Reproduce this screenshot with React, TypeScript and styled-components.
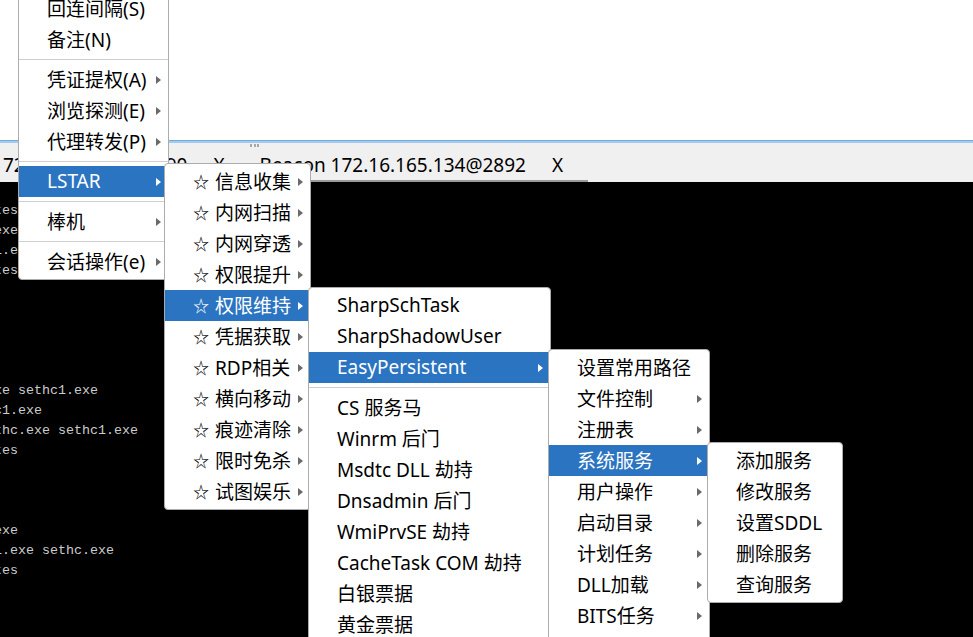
import React from "react";
import styled, { createGlobalStyle } from "styled-components";

const GlobalStyle = createGlobalStyle`
  html, body {
    margin: 0;
    padding: 0;
    background: #ffffff;
  }
  body {
    font-family: "Noto Sans", "Noto Sans CJK SC", sans-serif;
  }
`;

const Screen = styled.div`
  position: relative;
  width: 973px;
  height: 637px;
  overflow: hidden;
  display: flex;
  flex-direction: column;
  background: #ffffff;
`;

const TopPane = styled.div`
  flex: none;
  height: 140px;
  background: #ffffff;
`;

const SplitLine = styled.div`
  flex: none;
  height: 3px;
  box-sizing: border-box;
  border-top: 1px solid #74a9da;
  background: #a2ccef;
`;

const Grip = styled.div`
  flex: none;
  height: 7px;
  box-sizing: border-box;
  padding: 1px 0 0 250px;
  display: flex;
  gap: 1.5px;
  background: #f0f0f0;
  span {
    width: 2px;
    height: 3px;
    background: #a8a8a8;
  }
`;

const TabBar = styled.div`
  flex: none;
  height: 32px;
  display: flex;
  background: #f0f0f0;
  overflow: hidden;
`;

const TabStrip = styled.div`
  display: flex;
  margin-left: -89px;
`;

const Tab = styled.div<{ $active?: boolean }>`
  display: flex;
  align-items: center;
  gap: 26px;
  padding: 0 25px 0 10px;
  box-sizing: border-box;
  font-size: 19px;
  color: #000;
  white-space: nowrap;
  border-bottom: 2px solid ${(p) => (p.$active ? "#9a9a9a" : "transparent")};
`;

const Terminal = styled.div`
  flex: 1;
  background: #000;
  padding-top: 19px;
  overflow: hidden;
`;

const TermLine = styled.div`
  height: 20px;
  line-height: 20px;
  margin-left: -6px;
  font-family: "Liberation Mono", monospace;
  font-size: 13.33px;
  color: #cccccc;
  white-space: pre;
`;

const Menu = styled.div<{ $x: number; $y: number; $w: number; $tail?: boolean }>`
  position: absolute;
  left: ${(p) => p.$x}px;
  top: ${(p) => p.$y}px;
  width: ${(p) => p.$w}px;
  box-sizing: border-box;
  padding: 2px 0 ${(p) => (p.$tail ? "40px" : "2px")};
  background: #ffffff;
  border: 1px solid #acacac;
  border-radius: 4px;
`;

const Row = styled.div<{ $on?: boolean }>`
  display: flex;
  align-items: center;
  height: 31px;
  box-sizing: border-box;
  padding: 0 7px 2px 28px;
  font-size: 19px;
  white-space: nowrap;
  color: ${(p) => (p.$on ? "#ffffff" : "#000000")};
  background: ${(p) => (p.$on ? "#2b74c1" : "transparent")};
`;

const Label = styled.span`
  flex: 1;
  display: flex;
  align-items: center;
`;

const Star = styled.span`
  display: inline-block;
  width: 22px;
  font-family: "Noto Sans CJK SC", sans-serif;
  font-size: 16px;
  line-height: 1;
`;

const Arrow = styled.span<{ $on?: boolean }>`
  width: 0;
  height: 0;
  margin-top: 2px;
  border-top: 4px solid transparent;
  border-bottom: 4px solid transparent;
  border-left: 5px solid ${(p) => (p.$on ? "#ffffff" : "#6a6a6a")};
`;

const Sep = styled.div`
  height: 9px;
  display: flex;
  align-items: center;
  &::after {
    content: "";
    flex: 1;
    height: 1px;
    background: #cfcfcf;
  }
`;

type Item = { t: string; sub?: boolean; on?: boolean; star?: boolean } | "-";

const Item = ({ it }: { it: Exclude<Item, "-"> }) => (
  <Row $on={it.on}>
    <Label>
      {it.star && <Star>☆</Star>}
      {it.t}
    </Label>
    {it.sub && <Arrow $on={it.on} />}
  </Row>
);

const MenuList = ({ items }: { items: Item[] }) => (
  <>
    {items.map((it, i) =>
      it === "-" ? <Sep key={i} /> : <Item key={i} it={it} />
    )}
  </>
);

const mainMenu: Item[] = [
  { t: "回连间隔(S)" },
  { t: "备注(N)" },
  "-",
  { t: "凭证提权(A)", sub: true },
  { t: "浏览探测(E)", sub: true },
  { t: "代理转发(P)", sub: true },
  "-",
  { t: "LSTAR", sub: true, on: true },
  "-",
  { t: "棒机", sub: true },
  "-",
  { t: "会话操作(e)", sub: true },
];

const lstarMenu: Item[] = [
  "信息收集",
  "内网扫描",
  "内网穿透",
  "权限提升",
  "权限维持",
  "凭据获取",
  "RDP相关",
  "横向移动",
  "痕迹清除",
  "限时免杀",
  "试图娱乐",
].map((t) => ({ t, sub: true, star: true, on: t === "权限维持" }));

const keepMenu: Item[] = [
  { t: "SharpSchTask" },
  { t: "SharpShadowUser" },
  { t: "EasyPersistent", sub: true, on: true },
  "-",
  { t: "CS 服务马" },
  { t: "Winrm 后门" },
  { t: "Msdtc DLL 劫持" },
  { t: "Dnsadmin 后门" },
  { t: "WmiPrvSE 劫持" },
  { t: "CacheTask COM 劫持" },
  { t: "白银票据" },
  { t: "黄金票据" },
];

const easyMenu: Item[] = [
  { t: "设置常用路径" },
  { t: "文件控制", sub: true },
  { t: "注册表", sub: true },
  { t: "系统服务", sub: true, on: true },
  { t: "用户操作", sub: true },
  { t: "启动目录", sub: true },
  { t: "计划任务", sub: true },
  { t: "DLL加载", sub: true },
  { t: "BITS任务", sub: true },
];

const serviceMenu: Item[] = [
  { t: "添加服务" },
  { t: "修改服务" },
  { t: "设置SDDL" },
  { t: "删除服务" },
  { t: "查询服务" },
];

const termLines = [
  "tes",
  "exe",
  "1.exe",
  "tes",
  "",
  "",
  "",
  "",
  "",
  "xe sethc1.exe",
  "c1.exe",
  "thc.exe sethc1.exe",
  "tes",
  "",
  "",
  "",
  "exe",
  "1.exe sethc.exe",
  "tes",
];

export default function App() {
  return (
    <>
      <GlobalStyle />
      <Screen>
        <TopPane />
        <SplitLine />
        <Grip>
          <span />
          <span />
          <span />
        </Grip>
        <TabBar>
          <TabStrip>
            <Tab>
              <span>Beacon 172.16.165.134@2890</span>
              <span>X</span>
            </Tab>
            <Tab $active>
              <span>Beacon 172.16.165.134@2892</span>
              <span>X</span>
            </Tab>
          </TabStrip>
        </TabBar>
        <Terminal>
          {termLines.map((l, i) => (
            <TermLine key={i}>{l}</TermLine>
          ))}
        </Terminal>

        <Menu $x={18} $y={-10} $w={151}>
          <MenuList items={mainMenu} />
        </Menu>
        <Menu $x={164} $y={163} $w={147}>
          <MenuList items={lstarMenu} />
        </Menu>
        <Menu $x={308} $y={287} $w={243}>
          <MenuList items={keepMenu} />
        </Menu>
        <Menu $x={548} $y={349} $w={162} $tail>
          <MenuList items={easyMenu} />
        </Menu>
        <Menu $x={707} $y={442} $w={136}>
          <MenuList items={serviceMenu} />
        </Menu>
      </Screen>
    </>
  );
}
